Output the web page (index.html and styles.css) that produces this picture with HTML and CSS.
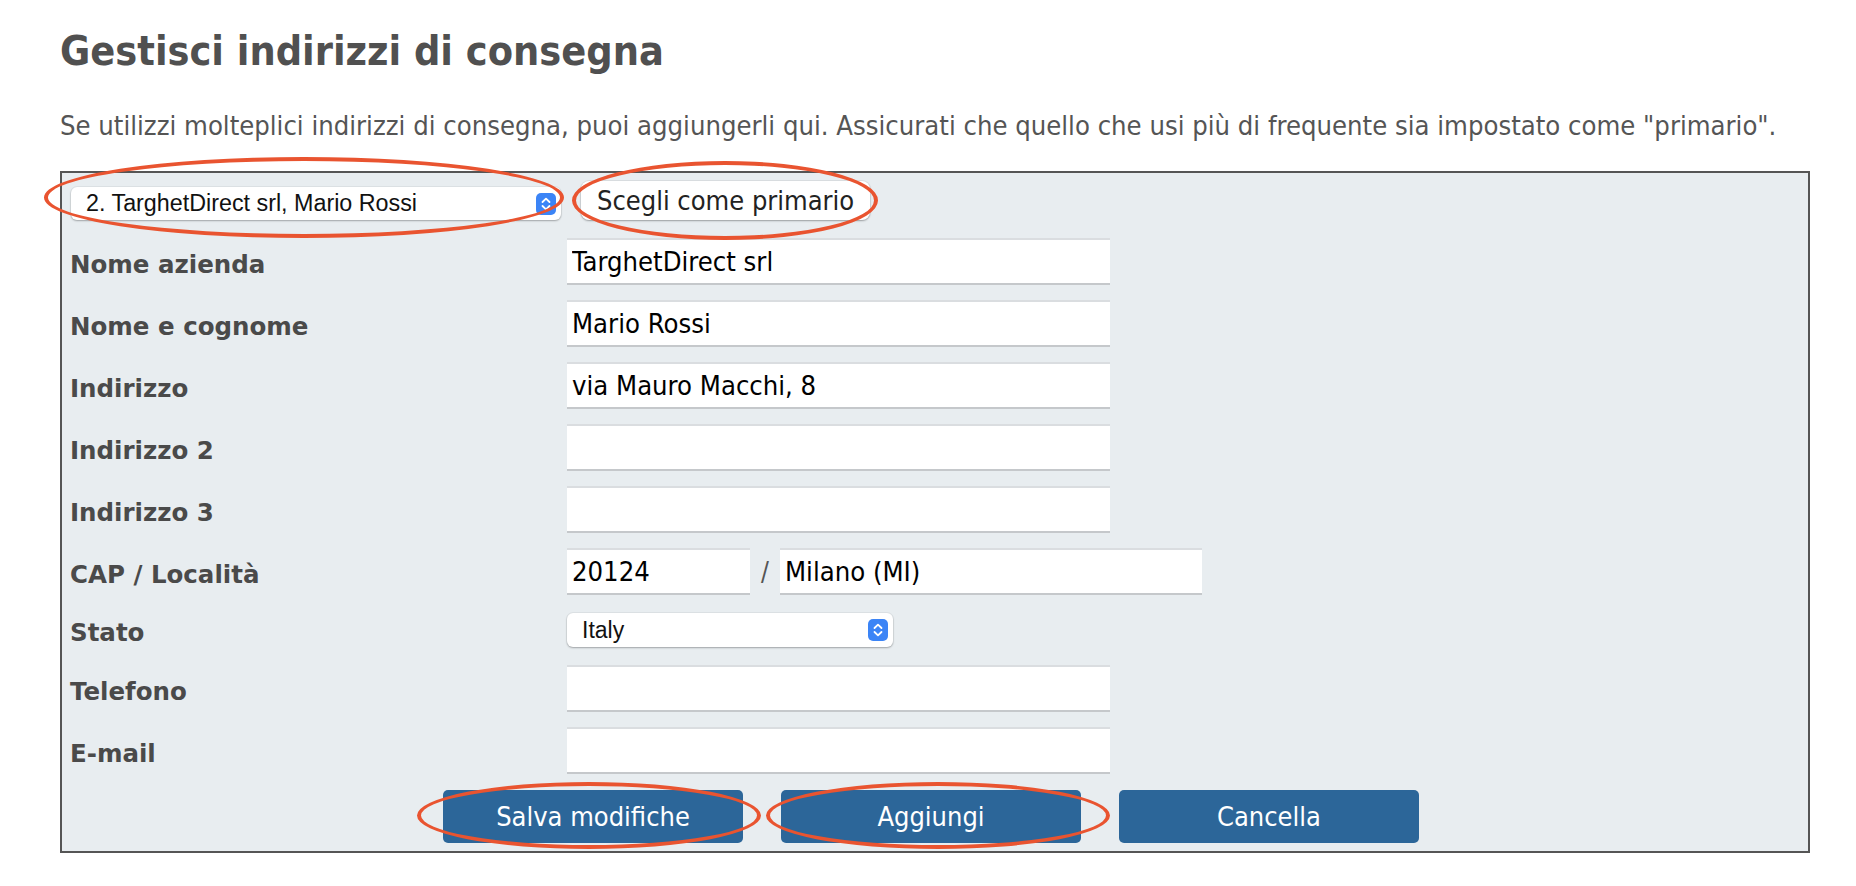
FILE: index.html
```html
<!DOCTYPE html>
<html lang="it">
<head>
<meta charset="utf-8">
<title>Gestisci indirizzi di consegna</title>
<link rel="stylesheet" href="styles.css">
</head>
<body>
<div class="page">
	<h1 class="title">Gestisci indirizzi di consegna</h1>
	<p class="intro">Se utilizzi molteplici indirizzi di consegna, puoi aggiungerli qui. Assicurati che quello che usi più di frequente sia impostato come "primario".</p>

	<form class="addr">
		<div class="addr-top">
			<span class="mark mark-pick">
				<span class="pick pick-addr">2. TarghetDirect srl, Mario Rossi
					<svg class="stepper" width="20" height="22" viewBox="0 0 20 22"><rect width="20" height="22" rx="5" fill="#3b84f6"/><path d="M6.5 9L10 5.6L13.5 9M6.5 13L10 16.4L13.5 13" fill="none" stroke="#fff" stroke-width="1.8" stroke-linecap="round" stroke-linejoin="round"/></svg>
				</span>
				<span class="ring"></span>
			</span>
			<span class="mark mark-primary">
				<button type="button" class="btn-plain">Scegli come primario</button>
				<span class="ring"></span>
			</span>
		</div>

		<div class="row"><label>Nome azienda</label><input class="field" type="text" value="TarghetDirect srl"></div>
		<div class="row"><label>Nome e cognome</label><input class="field" type="text" value="Mario Rossi"></div>
		<div class="row"><label>Indirizzo</label><input class="field" type="text" value="via Mauro Macchi, 8"></div>
		<div class="row"><label>Indirizzo 2</label><input class="field" type="text" value=""></div>
		<div class="row"><label>Indirizzo 3</label><input class="field" type="text" value=""></div>
		<div class="row"><label>CAP / Località</label>
			<div class="cap">
				<input class="field field-cap" type="text" value="20124">
				<span class="slash">/</span>
				<input class="field field-city" type="text" value="Milano (MI)">
			</div>
		</div>
		<div class="row row-state"><label>Stato</label>
			<span class="pick pick-state">Italy
				<svg class="stepper" width="20" height="22" viewBox="0 0 20 22"><rect width="20" height="22" rx="5" fill="#3b84f6"/><path d="M6.5 9L10 5.6L13.5 9M6.5 13L10 16.4L13.5 13" fill="none" stroke="#fff" stroke-width="1.8" stroke-linecap="round" stroke-linejoin="round"/></svg>
			</span>
		</div>
		<div class="row"><label>Telefono</label><input class="field" type="text" value=""></div>
		<div class="row"><label>E-mail</label><input class="field" type="text" value=""></div>

		<div class="actions">
			<span class="mark mark-save"><button type="button" class="btn">Salva modifiche</button><span class="ring"></span></span>
			<span class="mark mark-add"><button type="button" class="btn">Aggiungi</button><span class="ring"></span></span>
			<button type="button" class="btn">Cancella</button>
		</div>
	</form>
</div>
</body>
</html>
```

FILE: styles.css
```css
body {
	margin: 0;
	background: #fff;
	color: #555;
	font-family: "DejaVu Sans Condensed", "DejaVu Sans", sans-serif;
	font-stretch: condensed;
}
.page {
	padding: 0 46px 0 60px;
}
.title {
	margin: 27px 0 0;
	font-size: 41px;
	line-height: 48px;
	font-weight: bold;
	color: #505050;
}
.intro {
	margin: 35px 0 0;
	font-size: 27.2px;
	line-height: 32px;
}

/* form box */
.addr {
	margin-top: 29px;
	border: 2px solid #555;
	background: #e8edf0;
	padding: 8px 8px 8px 8px;
}
.addr-top {
	display: flex;
	align-items: flex-end;
	gap: 20px;
	height: 39px;
	padding-left: 1px;
	margin-bottom: 18px;
}
.row {
	display: grid;
	grid-template-columns: 497px auto;
	align-items: center;
	min-height: 47px;
	margin-bottom: 15px;
}
.row label {
	padding-top: 5px;
	font-family: "DejaVu Sans", sans-serif;
	font-stretch: normal;
	font-weight: bold;
	font-size: 24.5px;
	color: #4a4a4a;
}
.row-state {
	min-height: 40px;
}
.field {
	box-sizing: border-box;
	width: 543px;
	height: 47px;
	margin: 0;
	padding: 0 5px;
	border: none;
	border-top: 2px solid #dadde0;
	border-bottom: 2px solid #c5c8cb;
	background: #fff;
	font-family: inherit;
	font-stretch: condensed;
	font-size: 27.2px;
	color: #000;
	outline: none;
}
.cap {
	display: flex;
	align-items: center;
}
.field-cap {
	width: 183px;
}
.field-city {
	width: 422px;
}
.slash {
	width: 30px;
	text-align: center;
	font-size: 26px;
	color: #555;
}

/* mac style pop-up */
.pick {
	box-sizing: border-box;
	display: flex;
	align-items: center;
	justify-content: space-between;
	background: #fff;
	border-radius: 6px;
	box-shadow: 0 1px 2px rgba(0, 0, 0, .28), 0 0 0 1px rgba(0, 0, 0, .04);
	font-family: "Liberation Sans", Arial, sans-serif;
	font-stretch: normal;
	color: #111;
	padding: 0 5px 0 15px;
}
.pick-addr {
	width: 490px;
	height: 33px;
	font-size: 23.3px;
}
.pick-state {
	width: 326px;
	height: 34px;
	font-size: 23px;
}
.stepper {
	flex: none;
}

.btn-plain {
	height: 39px;
	padding: 0 16px;
	border: none;
	border-radius: 8px;
	background: #fff;
	box-shadow: 0 1px 2px rgba(0, 0, 0, .3), 0 0 0 1px rgba(0, 0, 0, .05);
	font-family: inherit;
	font-stretch: condensed;
	font-size: 27px;
	color: #222;
}

.actions {
	display: flex;
	justify-content: center;
	gap: 38px;
	padding: 1px 8px 0 0;
}
.btn {
	width: 300px;
	height: 53px;
	border: none;
	border-radius: 5px;
	background: #2c6699;
	color: #fff;
	font-family: inherit;
	font-stretch: condensed;
	font-size: 27px;
}

/* red hand-drawn rings */
.mark {
	position: relative;
	display: inline-flex;
}
.ring {
	position: absolute;
	border: 4px solid #e95430;
	border-radius: 50%;
	pointer-events: none;
}
.mark-pick .ring {
	inset: -30px -3px -18px -27px;
}
.mark-primary .ring {
	inset: -20px -8px -20px -9px;
}
.mark-save .ring {
	inset: -8px -18px -6px -26px;
}
.mark-add .ring {
	inset: -8px -29px -6px -15px;
}
```
